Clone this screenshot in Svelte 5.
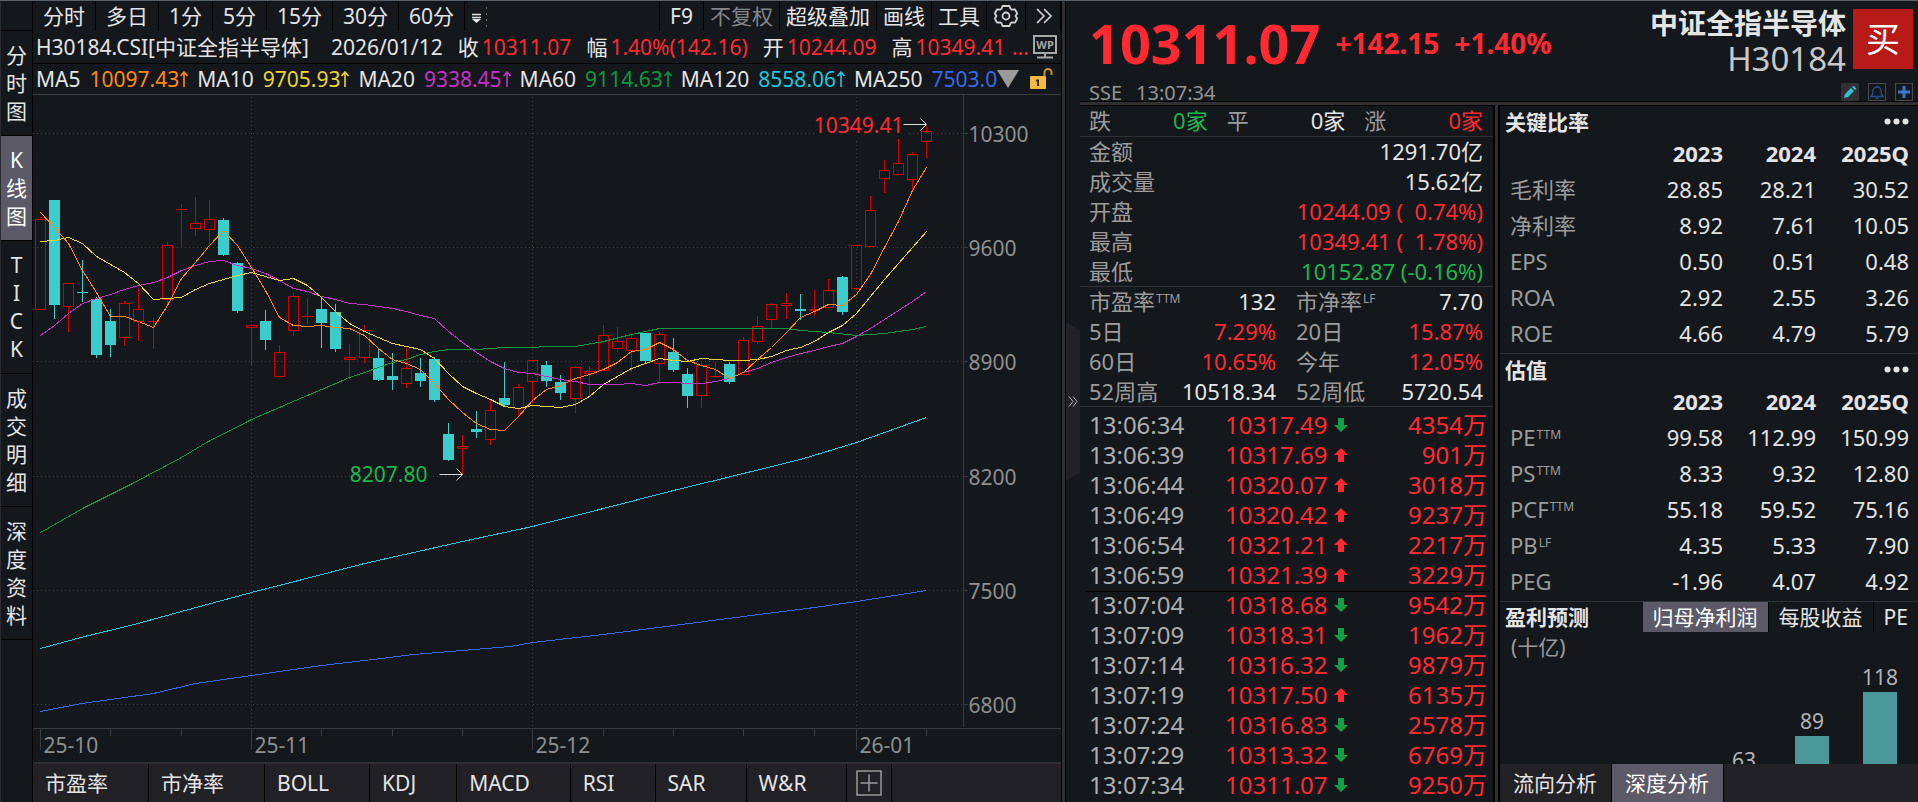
<script>
  const periods = ["分时", "多日", "1分", "5分", "15分", "30分", "60分"];
  const sideTabs = ["分时图", "K线图", "TICK", "成交明细", "深度资料"];
  const indicators = ["市盈率", "市净率", "BOLL", "KDJ", "MACD", "RSI", "SAR", "W&R"];

  const averages = [
    { name: "MA5", value: "10097.43", tone: "orange" },
    { name: "MA10", value: "9705.93", tone: "yellow" },
    { name: "MA20", value: "9338.45", tone: "magenta" },
    { name: "MA60", value: "9114.63", tone: "green" },
    { name: "MA120", value: "8558.06", tone: "cyan" },
    { name: "MA250", value: "7503.01", tone: "blue" },
  ];

  const summary = [
    { label: "金额", value: "1291.70亿", tone: "" },
    { label: "成交量", value: "15.62亿", tone: "" },
    { label: "开盘", value: "10244.09 (  0.74%)", tone: "up" },
    { label: "最高", value: "10349.41 (  1.78%)", tone: "up" },
    { label: "最低", value: "10152.87 (-0.16%)", tone: "down" },
  ];

  const metrics = [
    { label: "市盈率", sup: "TTM", value: "132", tone: "" },
    { label: "市净率", sup: "LF", value: "7.70", tone: "" },
    { label: "5日", value: "7.29%", tone: "up" },
    { label: "20日", value: "15.87%", tone: "up" },
    { label: "60日", value: "10.65%", tone: "up" },
    { label: "今年", value: "12.05%", tone: "up" },
    { label: "52周高", value: "10518.34", tone: "" },
    { label: "52周低", value: "5720.54", tone: "" },
  ];

  const trades = [
    ["13:06:34", "10317.49", "down", "4354万"],
    ["13:06:39", "10317.69", "up", "901万"],
    ["13:06:44", "10320.07", "up", "3018万"],
    ["13:06:49", "10320.42", "up", "9237万"],
    ["13:06:54", "10321.21", "up", "2217万"],
    ["13:06:59", "10321.39", "up", "3229万"],
    ["13:07:04", "10318.68", "down", "9542万"],
    ["13:07:09", "10318.31", "down", "1962万"],
    ["13:07:14", "10316.32", "down", "9879万"],
    ["13:07:19", "10317.50", "up", "6135万"],
    ["13:07:24", "10316.83", "down", "2578万"],
    ["13:07:29", "10313.32", "down", "6769万"],
    ["13:07:34", "10311.07", "down", "9250万"],
  ];

  const ratioBlocks = [
    {
      title: "关键比率",
      rows: [
        ["毛利率", "", "28.85", "28.21", "30.52"],
        ["净利率", "", "8.92", "7.61", "10.05"],
        ["EPS", "", "0.50", "0.51", "0.48"],
        ["ROA", "", "2.92", "2.55", "3.26"],
        ["ROE", "", "4.66", "4.79", "5.79"],
      ],
    },
    {
      title: "估值",
      rows: [
        ["PE", "TTM", "99.58", "112.99", "150.99"],
        ["PS", "TTM", "8.33", "9.32", "12.80"],
        ["PCF", "TTM", "55.18", "59.52", "75.16"],
        ["PB", "LF", "4.35", "5.33", "7.90"],
        ["PEG", "", "-1.96", "4.07", "4.92"],
      ],
    },
  ];

  const forecast = [63, 89, 118];
  const forecastMax = Math.max(...forecast);

  // [direction, body top, body bottom, high, low] in plot units
  const candles = [
    ["u", 219, 309, 216, 309], ["d", 200, 305, 199, 318], ["u", 283, 306, 282, 331], ["d", 292, 293, 259, 301],
    ["d", 299, 355, 296, 357], ["d", 321, 345, 308, 356], ["u", 303, 337, 300, 345], ["u", 309, 321, 287, 340],
    ["u", 321, 321, 317, 348], ["u", 245, 299, 241, 304], ["u", 209, 209, 203, 247], ["u", 223, 228, 196, 235],
    ["u", 219, 229, 199, 243], ["d", 220, 255, 217, 255], ["d", 263, 311, 261, 312], ["u", 325, 327, 324, 365],
    ["d", 321, 340, 309, 349], ["u", 352, 376, 344, 376], ["u", 296, 330, 292, 335], ["u", 316, 316, 297, 323],
    ["d", 309, 323, 297, 347], ["d", 312, 349, 303, 351], ["u", 357, 359, 343, 378], ["u", 330, 357, 324, 362],
    ["d", 358, 380, 347, 380], ["d", 376, 380, 352, 389], ["u", 368, 383, 345, 387], ["d", 373, 381, 357, 386],
    ["d", 359, 400, 356, 401], ["d", 434, 460, 422, 460], ["u", 446, 448, 434, 474], ["d", 429, 432, 410, 437],
    ["u", 410, 439, 398, 444], ["d", 398, 405, 361, 405], ["u", 387, 408, 383, 416], ["u", 360, 381, 360, 402],
    ["d", 365, 381, 360, 386], ["d", 382, 393, 374, 399], ["u", 367, 398, 365, 412], ["u", 371, 373, 365, 395],
    ["u", 335, 370, 324, 370], ["u", 341, 348, 326, 351], ["u", 338, 350, 334, 371], ["d", 333, 361, 333, 362],
    ["u", 334, 363, 331, 381], ["d", 352, 370, 337, 371], ["d", 374, 396, 367, 407], ["u", 365, 395, 362, 407],
    ["u", 376, 376, 361, 376], ["d", 364, 382, 361, 383], ["u", 340, 374, 336, 374], ["u", 326, 341, 315, 343],
    ["u", 304, 319, 302, 327], ["u", 303, 305, 292, 318], ["d", 309, 311, 293, 319], ["u", 309, 310, 289, 315],
    ["u", 290, 307, 278, 307], ["d", 277, 312, 275, 314], ["u", 245, 288, 245, 289], ["u", 210, 246, 195, 246],
    ["u", 170, 178, 159, 192], ["u", 163, 174, 138, 174], ["u", 154, 179, 151, 190], ["u", 131, 141, 125, 157],
  ];

  const daily = (ys) => ys.map((y, i) => [i, y]);

  const lines = [
    { tone: "green", pts: [[0, 532], [3.1, 507], [6.4, 484], [10, 457], [11.8, 442], [15, 419], [18.1, 400], [21.3, 381], [22, 377], [23, 372], [24, 367], [25, 362], [26, 359], [27, 354], [28, 351], [29, 349], [31, 349], [33, 347], [38, 346], [40, 341], [42, 334], [43, 331], [44, 328], [49, 328], [53, 328], [54, 330], [56, 332], [58, 335], [60, 333], [62, 329], [63, 326]] },
    { tone: "cyan", pts: [[0, 648], [3.1, 636], [6.4, 625], [10, 611], [15, 592], [18.6, 579], [23, 563], [26.5, 552], [30, 541], [35, 526], [40, 508], [45, 490], [50, 473], [54, 459], [58, 442], [63, 417]] },
    { tone: "blue", pts: [[0, 711], [2.9, 703], [5, 699], [8, 693], [11, 683], [15, 675], [20, 665], [23, 660], [26.5, 654], [30, 650], [33.4, 646], [35, 642], [40, 634], [45, 625], [50, 616], [55, 607], [58, 601], [63, 590]] },
    { tone: "magenta", pts: daily([335, 325, 313, 303, 298, 294, 289, 285, 282, 277, 270, 265, 261, 260, 265, 268, 273, 280, 288, 291, 296, 299, 303, 304, 306, 308, 311, 315, 318, 331, 342, 352, 361, 368, 372, 373, 376, 379, 381, 384, 384, 384, 383, 385, 382, 382, 383, 383, 381, 378, 372, 368, 362, 357, 353, 350, 346, 343, 336, 328, 319, 310, 301, 291]) },
    { tone: "yellow", pts: daily([241, 240, 237, 243, 256, 264, 272, 283, 299, 298, 297, 289, 283, 279, 275, 272, 276, 280, 278, 285, 297, 311, 323, 331, 337, 343, 346, 349, 358, 373, 386, 393, 399, 406, 408, 405, 406, 407, 404, 396, 384, 376, 368, 363, 358, 360, 361, 358, 359, 360, 360, 359, 356, 350, 347, 341, 332, 325, 313, 296, 279, 263, 247, 231]) },
    { tone: "orange", pts: daily([212, 227, 243, 270, 292, 316, 316, 321, 327, 305, 278, 262, 245, 230, 245, 267, 290, 317, 325, 326, 325, 327, 328, 335, 348, 359, 363, 369, 383, 399, 412, 423, 429, 430, 416, 400, 389, 385, 378, 374, 369, 362, 351, 349, 342, 349, 360, 365, 369, 378, 372, 359, 347, 332, 317, 311, 304, 305, 294, 274, 247, 221, 190, 167]) },
  ];

  const priceTicks = [[10300, 133], [9600, 247], [8900, 361], [8200, 476], [7500, 590], [6800, 704]];
  const months = [[0, "25-10"], [15, "25-11"], [35, "25-12"], [58, "26-01"]];
  const weeks = [5, 10, 20, 25, 30, 40, 45, 50, 55, 63];

  let period = $state("");
  let side = $state("K线图");
  let forecastTab = $state("归母净利润");
  let bottomTab = $state("深度分析");
  let w = $state(1029);
  let h = $state(667);

  // plot units run from 95 at the top of the canvas to 762 at the bottom
  const y = (v) => Math.round(((v - 95) * h) / 667) + 0.5;
  const x = (i) => Math.round(((7 + i * 14.08) * w) / 1029) + 0.5;
  const axisX = $derived(Math.round((931 * w) / 1029) + 0.5);
  const axisY = $derived(y(728));
  const path = (pts) => pts.map(([i, v]) => `${x(i)},${y(v)}`).join(" ");
</script>

<div class="terminal">
  <section class="left">
    <nav class="side">
      <div class="side-blank"></div>
      {#each sideTabs as tab}
        <button class="side-tab" class:active={side === tab} onclick={() => (side = tab)}>
          {#each [...tab] as ch}<span>{ch}</span>{/each}
        </button>
      {/each}
    </nav>

    <div class="chart-col">
      <div class="toolbar">
        {#each periods as p}
          <button class:on={period === p} onclick={() => (period = p)}>{p}</button>
        {/each}
        <button class="more" aria-label="更多周期">
          <svg width="18" height="26" viewBox="0 0 18 26">
            <path d="M1 11.500h9M1 14.500h9" stroke="#e4e4e4" stroke-width="1.500" />
            <path d="M1 16h9l-4.500 4z" fill="#e4e4e4" />
            <path d="M15.500 4v22" stroke="#66686c" stroke-dasharray="2 4" />
          </svg>
        </button>
        <span class="grow"></span>
        <button>F9</button>
        <button class="tight dim">不复权</button>
        <button class="tight">超级叠加</button>
        <button class="tight">画线</button>
        <button class="tight">工具</button>
        <button class="gear" aria-label="设置">
          <svg width="24" height="24" viewBox="0 0 24 24" fill="none" stroke="#d4d4d4" stroke-width="1.800" stroke-linejoin="round">
            <path d="M8.500 2h7l1 2.800 1.500.9 3-.4 2.200 4.200-1.700 2.500 1.700 2.500-2.200 4.200-3-.4-1.500.9-1 2.800h-7l-1-2.800-1.500-.9-3 .4-2.200-4.200L2.500 12 .8 9.500 3 5.300l3 .4 1.500-.9z" />
            <circle cx="12" cy="12" r="3.500" />
          </svg>
        </button>
        <button class="expand" aria-label="展开">
          <svg width="18" height="18" viewBox="0 0 18 18" fill="none" stroke="#d4d4d4" stroke-width="1.600">
            <path d="M2 2l7 7-7 7M9 2l7 7-7 7" />
          </svg>
        </button>
      </div>

      <div class="info">
        <span class="sym">H30184.CSI[中证全指半导体]</span>
        <span class="date">2026/01/12</span>
        <span>收<b>10311.07</b></span>
        <span>幅<b>1.40%(142.16)</b></span>
        <span>开<b>10244.09</b></span>
        <span>高<b>10349.41</b></span>
        <span class="up rest">...</span>
        <button class="plain wp" aria-label="WP">
          <svg width="24" height="24" viewBox="0 0 24 24">
            <path d="M1 1h22v17H1zM12 18v4M4 22.500h16" fill="none" stroke="#a8a8a8" stroke-width="2" />
            <text x="12" y="14" text-anchor="middle" font-size="11" font-weight="700" fill="#a8a8a8">WP</text>
          </svg>
        </button>
      </div>

      <div class="averages">
        <div class="ma-list">
          {#each averages as ma}
            <span class="ma">{ma.name}<em class={ma.tone}>{ma.value}<svg width="10" height="16" viewBox="0 0 10 16"><path d="M5 16V1M1.500 5L5 1l3.500 4" /></svg></em></span>
          {/each}
        </div>
        <button class="plain" aria-label="均线列表">
          <svg width="22" height="18" viewBox="0 0 22 18"><path d="M0 0h22L11 18z" fill="#9b9b9b" /></svg>
        </button>
        <button class="plain lock" aria-label="锁定">
          <svg width="24" height="22" viewBox="0 0 24 22">
            <rect x="0" y="8" width="16" height="13" rx="1" fill="#f5b942" />
            <path d="M14.500 8V4.500a3.500 3.500 0 0 1 7 0V7" fill="none" stroke="#c98f28" stroke-width="2" />
            <path d="M6 12.500h3M8 12v6" stroke="#3a2c10" stroke-width="2" />
          </svg>
        </button>
      </div>

      <div class="plot" bind:clientWidth={w} bind:clientHeight={h}>
        <svg width={w} height={h}>
          <g class="grid">
            {#each priceTicks as [, py]}
              <line x1="0" x2={axisX} y1={y(py)} y2={y(py)} />
            {/each}
            {#each months.slice(1) as [i]}
              <line x1={x(i)} x2={x(i)} y1="2" y2={axisY} />
            {/each}
          </g>
          <g class="axis">
            <line x1={axisX} x2={axisX} y1="0" y2={axisY - 2} />
            <line x1="0" x2={w} y1={axisY} y2={axisY} />
            {#each priceTicks as [, py]}
              <line x1={axisX} x2={axisX + 4} y1={y(py)} y2={y(py)} />
            {/each}
            {#each months as [i]}
              <line x1={x(i)} x2={x(i)} y1={axisY} y2={axisY + 21} />
            {/each}
            {#each weeks as i}
              <line x1={x(i)} x2={x(i)} y1={axisY} y2={axisY + 7} />
            {/each}
          </g>
          <rect class="mask" x={x(63) - 112} y={y(110)} width="92" height="28" />

          {#each candles as [dir, top, bottom, high, low], i}
            {#if dir === "d"}
              <line class="wick-d" x1={x(i)} x2={x(i)} y1={y(high)} y2={y(low)} />
              <rect class="body-d" x={x(i) - 5.5} y={y(top) - 0.5} width="11" height={Math.max(1, y(bottom) - y(top))} />
            {:else}
              <line class="wick-u" x1={x(i)} x2={x(i)} y1={y(high)} y2={y(top)} />
              <line class="wick-u" x1={x(i)} x2={x(i)} y1={y(bottom)} y2={y(low)} />
              {#if top === bottom}
                <line class="wick-u" x1={x(i) - 5.5} x2={x(i) + 5.5} y1={y(top)} y2={y(top)} />
              {:else}
                <rect class="wick-u" x={x(i) - 5} y={y(top)} width="10" height={y(bottom) - y(top)} />
              {/if}
            {/if}
          {/each}

          {#each lines as line}
            <polyline class="line {line.tone}" points={path(line.pts)} />
          {/each}

          <g class="axis-text">
            {#each priceTicks as [price, py]}
              <text x={axisX + 5} y={y(py) + 8}>{price}</text>
            {/each}
            {#each months as [i, label]}
              <text x={x(i) + 3} y={axisY + 24}>{label}</text>
            {/each}
          </g>
          <text class="high" x={x(63) - 23} y={y(125) + 7} text-anchor="end">10349.41</text>
          <text class="low" x={x(30) - 35} y={y(474) + 7} text-anchor="end">8207.80</text>
          <path class="pointer" d="M{x(63) - 23} {y(124)}h23m-6 -6l6 6-6 6" />
          <path class="pointer" d="M{x(30) - 23} {y(474)}h23m-6 -6l6 6-6 6" />
        </svg>
      </div>

      <div class="indicators">
        {#each indicators as name}
          <button>{name}</button>
        {/each}
        <button class="add" aria-label="添加指标">
          <svg width="26" height="26" viewBox="0 0 26 26" fill="none" stroke="#9a9a9a" stroke-width="1.500">
            <path d="M1 1h24v24H1zM13 4.500v17M4.500 13h17" />
          </svg>
        </button>
      </div>
    </div>
    <div class="splitter"></div>
  </section>

  <section class="right">
    <div class="gutter">
      <button class="handle" aria-label="收起">
        <svg width="10" height="11" viewBox="0 0 10 11" fill="none" stroke="#b5b5b5">
          <path d="M1 0.500l4 5-4 5M5 0.500l4 5-4 5" />
        </svg>
      </button>
    </div>

    <div class="quote">
      <header>
        <div class="price-side">
          <div class="price-row">
            <strong class="price">10311.07</strong>
            <strong class="chg">+142.15</strong>
            <strong class="chg">+1.40%</strong>
          </div>
          <div class="time"><span>SSE</span><span>13:07:34</span></div>
        </div>
        <div class="name-side">
          <div class="name-row">
            <div class="names">
              <h1>中证全指半导体</h1>
              <div class="code">H30184</div>
            </div>
            <button class="buy">买</button>
          </div>
          <div class="tools">
            <button class="pencil" aria-label="编辑">
              <svg width="14" height="14" viewBox="0 0 14 14"><path d="M1 13l1-4 6-6 3 3-6 6zM9 2l1.500-1.300L13.300 3.500 12 5z" fill="#36c0d4" /></svg>
            </button>
            <button aria-label="提醒">
              <svg width="14" height="14" viewBox="0 0 14 14" fill="none" stroke="#2a508c" stroke-width="1.300"><path d="M7 1v1M1 11.500c1.500-1 1.800-2 1.800-4.500C2.800 4 4.500 2 7 2s4.200 2 4.200 5c0 2.500.3 3.500 1.800 4.500zM5.500 13.300h3" /></svg>
            </button>
            <button aria-label="加自选">
              <svg width="14" height="14" viewBox="0 0 14 14"><path d="M7 1v12M1 7h12" stroke="#3a76c4" stroke-width="3" /></svg>
            </button>
          </div>
        </div>
      </header>

      <div class="panels">
        <div class="stats">
          <dl class="breadth">
            <div><dt>跌</dt><dd class="down">0家</dd></div>
            <div><dt>平</dt><dd>0家</dd></div>
            <div><dt>涨</dt><dd class="up">0家</dd></div>
          </dl>
          <dl class="summary">
            {#each summary as s}
              <div><dt>{s.label}</dt><dd class={s.tone}>{s.value}</dd></div>
            {/each}
          </dl>
          <dl class="metrics">
            {#each metrics as m}
              <div><dt>{m.label}{#if m.sup}<sup>{m.sup}</sup>{/if}</dt><dd class={m.tone}>{m.value}</dd></div>
            {/each}
          </dl>
          <table class="trades">
            <tbody>
              {#each trades as [time, price, dir, vol], i}
                <tr class:minute={i === 6}>
                  <td class="t">{time}</td>
                  <td class="p">
                    {price}
                    <svg class={dir} width="14" height="14" viewBox="0 0 14 14">
                      <path d={dir === "up" ? "M7 0l7 7h-4v7H4V7H0z" : "M7 14l7-7h-4V0H4v7H0z"} />
                    </svg>
                  </td>
                  <td class="v">{vol}</td>
                </tr>
              {/each}
            </tbody>
          </table>
        </div>

        <div class="divider"></div>

        <div class="analysis">
          {#each ratioBlocks as block}
            <div class="block">
              <div class="block-head">
                <h2>{block.title}</h2>
                <button class="plain" aria-label="更多">
                  <svg width="25" height="7" viewBox="0 0 25 7" fill="#e4e4e4"><circle cx="3.500" cy="3.500" r="3" /><circle cx="12.500" cy="3.500" r="3" /><circle cx="21.500" cy="3.500" r="3" /></svg>
                </button>
              </div>
              <table class="ratios">
                <thead>
                  <tr><th></th><th>2023</th><th>2024</th><th>2025Q</th></tr>
                </thead>
                <tbody>
                  {#each block.rows as [label, sup, a, b, c]}
                    <tr><td>{label}{#if sup}<sup>{sup}</sup>{/if}</td><td>{a}</td><td>{b}</td><td>{c}</td></tr>
                  {/each}
                </tbody>
              </table>
            </div>
          {/each}

          <div class="forecast">
            <div class="forecast-head">
              <h2>盈利预测</h2>
              {#each ["归母净利润", "每股收益", "PE"] as tab}
                <button class:active={forecastTab === tab} onclick={() => (forecastTab = tab)}>{tab}</button>
              {/each}
            </div>
            <div class="unit">(十亿)</div>
            <div class="bars">
              {#each forecast as v}
                <div class="bar" style="margin-top:{Math.round((forecastMax - v) * 1.517)}px">
                  <span>{v}</span>
                  <div class="fill"></div>
                </div>
              {/each}
            </div>
          </div>

          <div class="bottom-tabs">
            {#each ["流向分析", "深度分析"] as tab}
              <button class:active={bottomTab === tab} onclick={() => (bottomTab = tab)}>{tab}</button>
            {/each}
          </div>
        </div>
      </div>
    </div>
  </section>
</div>

<style>
  :global(body) { background: #14171c; overflow: hidden; }

  .terminal {
    --bg: #14171c;
    --panel: #222126;
    --active: #5b5a66;
    --rule: #303136;
    --text: #e4e4e4;
    --muted: #9c9c9c;
    --red: #ff2a31;
    --grn: #18b84e;
    display: grid;
    grid-template-columns: minmax(0, 1066fr) minmax(0, 852fr);
    height: 100vh;
    box-sizing: border-box;
    border-top: 1px solid #59616b;
    background: var(--bg);
    color: var(--text);
    font-family: "Noto Sans", "Noto Sans CJK SC", sans-serif;
    font-size: 21px;
    line-height: 30px;
    white-space: nowrap;
  }
  button {
    margin: 0;
    padding: 0;
    border: 0;
    background: none;
    color: inherit;
    font: inherit;
    cursor: pointer;
  }
  svg { display: block; }
  h1, h2, dl, dd { margin: 0; }
  table { border-collapse: collapse; table-layout: fixed; }
  td, th { padding: 0; vertical-align: top; }
  .up { color: var(--red); }
  .down { color: var(--grn); }
  .plain { flex: none; }

  .left { display: flex; min-width: 0; min-height: 0; }
  .side {
    flex: none;
    width: 33px;
    box-sizing: border-box;
    border-left: 1px solid #2a2c31;
    border-right: 1px solid #000;
    display: flex;
    flex-direction: column;
  }
  .side-blank { height: 29px; border-bottom: 1px solid #000; }
  .side-tab {
    padding: 10px 0;
    border-bottom: 1px solid #000;
    line-height: 28px;
  }
  .side-tab span { display: block; }
  .side-tab.active { background: var(--active); color: #fff; }

  .chart-col { flex: 1; min-width: 0; display: flex; flex-direction: column; }
  .toolbar { flex: none; display: flex; height: 30px; }
  .toolbar button { padding: 0 10px; line-height: 28px; border-right: 1px solid #000; }
  .toolbar .more { padding: 0 0 0 6px; border: 0; }
  .toolbar .tight { padding: 0 6px; }
  .toolbar .grow { flex: 1; border-right: 1px solid #000; }
  .toolbar .dim { color: #85868a; }
  .toolbar .on { color: #fff; }
  .toolbar .gear { padding: 0 7px; }
  .toolbar .expand { padding: 0 7px 0 9px; }

  .info {
    flex: none;
    display: flex;
    align-items: center;
    height: 32px;
    padding: 0 4px 0 3px;
    gap: 15px;
    border-bottom: 1px solid #000;
  }
  .info b { margin-left: 3px; font-weight: 400; color: var(--red); }
  .info .date { margin: 0 0 0 7px; }
  .info .rest { flex: 1; text-align: right; margin-left: -15px; }
  .info .wp { margin-left: -11px; }

  .averages {
    flex: none;
    display: flex;
    align-items: center;
    height: 30px;
    padding: 0 7px 0 3px;
    border-bottom: 1px solid #3a3b3f;
  }
  .ma-list { flex: 1; min-width: 0; display: flex; gap: 8px; overflow: hidden; }
  .ma em { margin-left: 9px; font-style: normal; }
  .ma svg { display: inline-block; fill: none; stroke: currentColor; stroke-width: 1.600; }
  .lock { margin-left: 11px; }
  em.orange { color: #ff8a0a; }
  em.yellow { color: #ead62e; }
  em.magenta { color: #c233c4; }
  em.green { color: #0b9640; }
  em.cyan { color: #21c6da; }
  em.blue { color: #3b68e8; }

  .plot { flex: 1; min-height: 0; overflow: hidden; }
  .plot line, .plot rect, .plot polyline { shape-rendering: crispEdges; fill: none; }
  .grid line { stroke: #3e4044; stroke-dasharray: 1 3; }
  .axis line { stroke: #3a3b40; }
  .axis-text { fill: #8f8f8f; }
  .plot .mask { fill: #14171c; }
  .wick-d { stroke: #3bcdcc; }
  .plot .body-d { fill: #3bcdcc; }
  .wick-u { stroke: #d00000; }
  .line.orange { stroke: #ff8a0a; }
  .line.yellow { stroke: #ead62e; }
  .line.magenta { stroke: #c233c4; }
  .line.green { stroke: #0b9640; }
  .line.cyan { stroke: #21c6da; }
  .line.blue { stroke: #3b68e8; }
  .high { fill: var(--red); }
  .low { fill: var(--grn); }
  .pointer { fill: none; stroke: #dcdcdc; }

  .indicators {
    flex: none;
    display: flex;
    height: 38px;
    border-top: 2px solid #303034;
    background: var(--panel);
  }
  .indicators button { padding: 0 40px 0 12px; line-height: 38px; border-right: 1px solid #000; }
  .indicators .add { padding: 0 9px; }
  .splitter {
    flex: none;
    width: 3px;
    border-left: 1px solid #000;
    border-right: 1px solid #000;
    background: #303034;
  }

  .right { display: flex; min-width: 0; min-height: 0; }
  .gutter { flex: none; width: 14px; display: flex; align-items: center; }
  .handle {
    width: 14px;
    height: 158px;
    display: grid;
    place-items: center;
    background: var(--panel);
    clip-path: polygon(0 0, 100% 7px, 100% 151px, 0 100%);
  }
  .quote { flex: 1; min-width: 0; display: flex; flex-direction: column; }
  header {
    flex: none;
    display: flex;
    justify-content: space-between;
    height: 100px;
    padding: 0 5px 0 9px;
    border-bottom: 1px solid #000;
  }
  .price-row { display: flex; align-items: center; height: 84px; gap: 15px; color: var(--red); }
  .price { font-size: 54px; line-height: 84px; }
  .chg { font-size: 28px; line-height: 40px; }
  .time { display: flex; gap: 14px; font-size: 20px; line-height: 16px; color: #949494; }
  .name-side { display: flex; flex-direction: column; justify-content: space-between; }
  .name-row { display: flex; gap: 7px; padding-top: 4px; }
  .names { text-align: right; line-height: 36px; }
  h1 { font-size: 28px; line-height: 36px; font-weight: 700; }
  .code { font-size: 33px; color: #c8c8c8; }
  .buy {
    width: 60px;
    height: 60px;
    margin-top: 4px;
    background: #b81a1a;
    color: #fff;
    font-size: 34px;
    line-height: 60px;
  }
  .tools { display: flex; justify-content: flex-end; gap: 9px; }
  .tools button {
    width: 18px;
    height: 18px;
    display: grid;
    place-items: center;
    box-sizing: border-box;
    border: 1px solid #4a4a4e;
  }
  .tools .pencil { border-color: #303036; background: #303036; }

  .panels {
    flex: 1;
    min-height: 0;
    display: grid;
    grid-template-columns: minmax(0, 413fr) 7px minmax(0, 418fr);
    border-top: 3px solid #303034;
  }
  .stats { border-top: 1px solid #000; overflow: hidden; font-size: 22px; line-height: 28px; }
  dl { padding: 0 10px 0 9px; border-bottom: 1px solid var(--rule); }
  dl div { display: flex; justify-content: space-between; height: 30px; }
  dt { color: var(--muted); }
  .breadth { display: grid; grid-template-columns: repeat(3, 1fr); column-gap: 19px; }
  .metrics { display: grid; grid-template-columns: repeat(2, 1fr); column-gap: 20px; }
  .summary dd { white-space: pre; }
  .summary div:last-child { height: 29px; }
  .metrics div:nth-last-child(-n + 2) { height: 29px; }
  sup { margin-left: 1px; font-size: 12px; line-height: 0; vertical-align: 7px; }
  .trades { width: calc(100% - 10px); margin: 4px 4px 0 6px; font-size: 24px; }
  .trades tr { height: 30px; }
  .trades .minute { box-shadow: inset 0 1px #000; }
  .t { width: 136px; padding-left: 3px; color: #aeaeae; }
  .p { width: 150px; color: var(--red); }
  .p svg { display: inline-block; vertical-align: 2px; }
  .p .up { fill: var(--red); }
  .p .down { fill: #14a045; }
  .v { padding-right: 2px; text-align: right; color: var(--red); }

  .divider { border: solid #000; border-width: 0 2px; background: #303034; }

  .analysis { display: flex; flex-direction: column; min-height: 0; border-top: 1px solid #000; }
  .block { flex: none; border-bottom: 1px solid var(--rule); }
  .block-head { display: flex; align-items: center; justify-content: space-between; height: 31px; padding: 0 9px 0 5px; }
  h2 { font-size: 21px; font-weight: 700; }
  .ratios { width: calc(100% - 19px); margin-left: 10px; font-size: 22px; line-height: 33px; }
  .ratios tr { height: 36px; }
  .ratios th, .ratios td { width: 93px; text-align: right; }
  .ratios th:first-child, .ratios td:first-child { width: auto; text-align: left; color: var(--muted); }

  .forecast { flex: 1; min-height: 0; overflow: hidden; display: flex; flex-direction: column; }
  .forecast-head { flex: none; display: flex; height: 30px; padding-left: 5px; }
  .forecast-head h2 { flex: 1; }
  .forecast-head button { padding: 0 10px; border-right: 1px solid #000; }
  .forecast-head button:last-child { border: 0; }
  .forecast-head .active { background: var(--active); color: #fff; }
  .unit { flex: none; padding-left: 11px; color: var(--muted); }
  .bars { flex: 1; min-height: 0; display: flex; justify-content: flex-end; gap: 34px; padding-right: 21px; overflow: hidden; }
  .bar { flex: none; width: 34px; text-align: center; color: #b4b4b4; }
  .bar span { display: flex; justify-content: center; }
  .fill { height: 180px; background: #4c9799; }

  .bottom-tabs { flex: none; display: flex; height: 38px; background: var(--panel); }
  .bottom-tabs button { padding: 0 14px 0 13px; line-height: 38px; border-right: 1px solid #000; }
  .bottom-tabs .active { background: var(--active); color: #fff; }
</style>
